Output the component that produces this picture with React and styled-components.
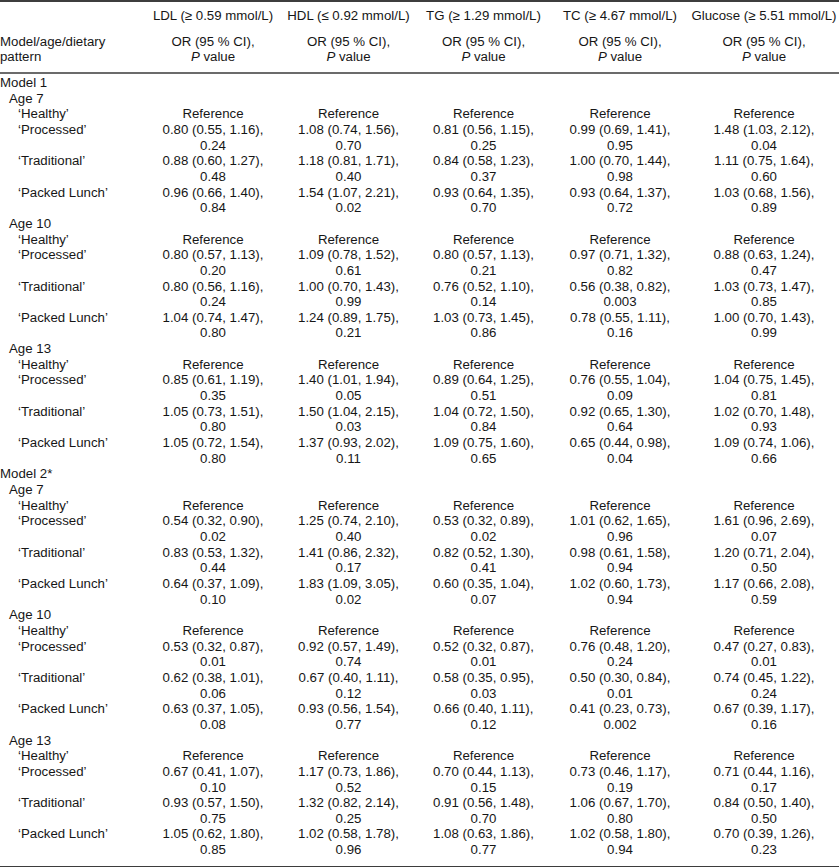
import React from "react";
import styled, { createGlobalStyle } from "styled-components";

const GlobalStyle = createGlobalStyle`
  html, body {
    margin: 0;
    padding: 0;
    background: #ffffff;
  }
  body {
    font-family: "Liberation Sans", Arial, Helvetica, sans-serif;
    font-size: 13.25px;
    line-height: 15.65px;
    color: #161616;
  }
`;

const COLUMNS = "145px 136px 135px 135px 138px 150px";

const Table = styled.div`
  width: 839px;
  border-top: 2px solid #3d3d3d;
  border-bottom: 2px solid #3d3d3d;
`;

const Head = styled.div`
  padding: 6px 0 7px;
  border-bottom: 2px solid #6b6b6b;
  display: flex;
  flex-direction: column;
  gap: 10px;
`;

const Body = styled.div`
  padding: 1px 0 8px;
`;

const Row = styled.div`
  display: grid;
  grid-template-columns: ${COLUMNS};
`;

const Label = styled.div`
  padding-left: ${props => props.indent || 0}px;
  white-space: nowrap;
`;

const Cell = styled.div`
  text-align: center;
  white-space: nowrap;
`;

const Line = styled.div``;

const Italic = styled.i`
  font-style: italic;
`;

const measures = [
  "LDL (≥ 0.59 mmol/L)",
  "HDL (≤ 0.92 mmol/L)",
  "TG (≥ 1.29 mmol/L)",
  "TC (≥ 4.67 mmol/L)",
  "Glucose (≥ 5.51 mmol/L)"
];

const models = [
  {
    name: "Model 1",
    ages: [
      {
        age: "Age 7",
        rows: [
          ["‘Processed’", ["0.80 (0.55, 1.16)", "0.24"], ["1.08 (0.74, 1.56)", "0.70"], ["0.81 (0.56, 1.15)", "0.25"], ["0.99 (0.69, 1.41)", "0.95"], ["1.48 (1.03, 2.12)", "0.04"]],
          ["‘Traditional’", ["0.88 (0.60, 1.27)", "0.48"], ["1.18 (0.81, 1.71)", "0.40"], ["0.84 (0.58, 1.23)", "0.37"], ["1.00 (0.70, 1.44)", "0.98"], ["1.11 (0.75, 1.64)", "0.60"]],
          ["‘Packed Lunch’", ["0.96 (0.66, 1.40)", "0.84"], ["1.54 (1.07, 2.21)", "0.02"], ["0.93 (0.64, 1.35)", "0.70"], ["0.93 (0.64, 1.37)", "0.72"], ["1.03 (0.68, 1.56)", "0.89"]]
        ]
      },
      {
        age: "Age 10",
        rows: [
          ["‘Processed’", ["0.80 (0.57, 1.13)", "0.20"], ["1.09 (0.78, 1.52)", "0.61"], ["0.80 (0.57, 1.13)", "0.21"], ["0.97 (0.71, 1.32)", "0.82"], ["0.88 (0.63, 1.24)", "0.47"]],
          ["‘Traditional’", ["0.80 (0.56, 1.16)", "0.24"], ["1.00 (0.70, 1.43)", "0.99"], ["0.76 (0.52, 1.10)", "0.14"], ["0.56 (0.38, 0.82)", "0.003"], ["1.03 (0.73, 1.47)", "0.85"]],
          ["‘Packed Lunch’", ["1.04 (0.74, 1.47)", "0.80"], ["1.24 (0.89, 1.75)", "0.21"], ["1.03 (0.73, 1.45)", "0.86"], ["0.78 (0.55, 1.11)", "0.16"], ["1.00 (0.70, 1.43)", "0.99"]]
        ]
      },
      {
        age: "Age 13",
        rows: [
          ["‘Processed’", ["0.85 (0.61, 1.19)", "0.35"], ["1.40 (1.01, 1.94)", "0.05"], ["0.89 (0.64, 1.25)", "0.51"], ["0.76 (0.55, 1.04)", "0.09"], ["1.04 (0.75, 1.45)", "0.81"]],
          ["‘Traditional’", ["1.05 (0.73, 1.51)", "0.80"], ["1.50 (1.04, 2.15)", "0.03"], ["1.04 (0.72, 1.50)", "0.84"], ["0.92 (0.65, 1.30)", "0.64"], ["1.02 (0.70, 1.48)", "0.93"]],
          ["‘Packed Lunch’", ["1.05 (0.72, 1.54)", "0.80"], ["1.37 (0.93, 2.02)", "0.11"], ["1.09 (0.75, 1.60)", "0.65"], ["0.65 (0.44, 0.98)", "0.04"], ["1.09 (0.74, 1.06)", "0.66"]]
        ]
      }
    ]
  },
  {
    name: "Model 2*",
    ages: [
      {
        age: "Age 7",
        rows: [
          ["‘Processed’", ["0.54 (0.32, 0.90)", "0.02"], ["1.25 (0.74, 2.10)", "0.40"], ["0.53 (0.32, 0.89)", "0.02"], ["1.01 (0.62, 1.65)", "0.96"], ["1.61 (0.96, 2.69)", "0.07"]],
          ["‘Traditional’", ["0.83 (0.53, 1.32)", "0.44"], ["1.41 (0.86, 2.32)", "0.17"], ["0.82 (0.52, 1.30)", "0.41"], ["0.98 (0.61, 1.58)", "0.94"], ["1.20 (0.71, 2.04)", "0.50"]],
          ["‘Packed Lunch’", ["0.64 (0.37, 1.09)", "0.10"], ["1.83 (1.09, 3.05)", "0.02"], ["0.60 (0.35, 1.04)", "0.07"], ["1.02 (0.60, 1.73)", "0.94"], ["1.17 (0.66, 2.08)", "0.59"]]
        ]
      },
      {
        age: "Age 10",
        rows: [
          ["‘Processed’", ["0.53 (0.32, 0.87)", "0.01"], ["0.92 (0.57, 1.49)", "0.74"], ["0.52 (0.32, 0.87)", "0.01"], ["0.76 (0.48, 1.20)", "0.24"], ["0.47 (0.27, 0.83)", "0.01"]],
          ["‘Traditional’", ["0.62 (0.38, 1.01)", "0.06"], ["0.67 (0.40, 1.11)", "0.12"], ["0.58 (0.35, 0.95)", "0.03"], ["0.50 (0.30, 0.84)", "0.01"], ["0.74 (0.45, 1.22)", "0.24"]],
          ["‘Packed Lunch’", ["0.63 (0.37, 1.05)", "0.08"], ["0.93 (0.56, 1.54)", "0.77"], ["0.66 (0.40, 1.11)", "0.12"], ["0.41 (0.23, 0.73)", "0.002"], ["0.67 (0.39, 1.17)", "0.16"]]
        ]
      },
      {
        age: "Age 13",
        rows: [
          ["‘Processed’", ["0.67 (0.41, 1.07)", "0.10"], ["1.17 (0.73, 1.86)", "0.52"], ["0.70 (0.44, 1.13)", "0.15"], ["0.73 (0.46, 1.17)", "0.19"], ["0.71 (0.44, 1.16)", "0.17"]],
          ["‘Traditional’", ["0.93 (0.57, 1.50)", "0.75"], ["1.32 (0.82, 2.14)", "0.25"], ["0.91 (0.56, 1.48)", "0.70"], ["1.06 (0.67, 1.70)", "0.80"], ["0.84 (0.50, 1.40)", "0.50"]],
          ["‘Packed Lunch’", ["1.05 (0.62, 1.80)", "0.85"], ["1.02 (0.58, 1.78)", "0.96"], ["1.08 (0.63, 1.86)", "0.77"], ["1.02 (0.58, 1.80)", "0.94"], ["0.70 (0.39, 1.26)", "0.23"]]
        ]
      }
    ]
  }
];

const ValueCell = ({ value }) => (
  <Cell>
    <Line>{value[0]},</Line>
    <Line>{value[1]}</Line>
  </Cell>
);

const AgeBlock = ({ group }) => (
  <>
    <Row>
      <Label indent={9}>{group.age}</Label>
    </Row>
    <Row>
      <Label indent={18}>‘Healthy’</Label>
      {measures.map(m => (
        <Cell key={m}>Reference</Cell>
      ))}
    </Row>
    {group.rows.map(([pattern, ...values]) => (
      <Row key={pattern}>
        <Label indent={18}>{pattern}</Label>
        {values.map((v, i) => (
          <ValueCell key={i} value={v} />
        ))}
      </Row>
    ))}
  </>
);

const App = () => (
  <>
    <GlobalStyle />
    <Table>
      <Head>
        <Row>
          <Label />
          {measures.map(m => (
            <Cell key={m}>{m}</Cell>
          ))}
        </Row>
        <Row>
          <Label>
            <Line>Model/age/dietary</Line>
            <Line>pattern</Line>
          </Label>
          {measures.map(m => (
            <Cell key={m}>
              <Line>OR (95 % CI),</Line>
              <Line>
                <Italic>P</Italic> value
              </Line>
            </Cell>
          ))}
        </Row>
      </Head>
      <Body>
        {models.map(model => (
          <React.Fragment key={model.name}>
            <Row>
              <Label>{model.name}</Label>
            </Row>
            {model.ages.map(group => (
              <AgeBlock key={group.age} group={group} />
            ))}
          </React.Fragment>
        ))}
      </Body>
    </Table>
  </>
);

export default App;
